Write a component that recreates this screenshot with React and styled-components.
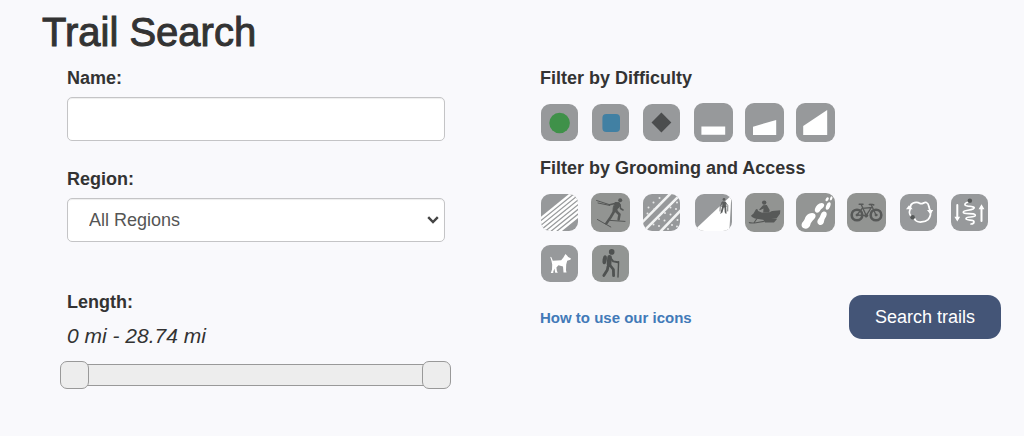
import React, { useState } from "react";
import styled, { createGlobalStyle } from "styled-components";

const MAX_MILES = 28.74;

const difficulty = [
    {
        name: "Easier",
        art: <circle cx="19.6" cy="20" r="10.3" fill="#3f9149" />
    },
    {
        name: "More difficult",
        art: <rect x="11.4" y="11" width="17.6" height="18" rx="4" fill="#4180a3" />
    },
    {
        name: "Most difficult",
        art: <path d="M19.4 9.6 29.3 19.6 19.4 29.6 9.5 19.6z" fill="#4b4d4e" />
    },
    {
        name: "Flat",
        large: true,
        art: <path d="M7.4 23.4H31.2V31.8H7.4z" fill="#fff" />
    },
    {
        name: "Rolling",
        large: true,
        art: <path d="M8 23.7 31.2 16.9V32H8z" fill="#fff" />
    },
    {
        name: "Steep",
        large: true,
        art: <path d="M7.2 23 31.2 7V32H7.2z" fill="#fff" />
    }
];

const grooming = [
    {
        name: "Groomed",
        art: (
            <g stroke="#fff" strokeWidth="2.4">
                {[0, 1, 2, 3, 4, 5, 6].map((n) => (
                    <path key={n} d={`M-2 ${27.6 + n * 4.7}L42 ${-8 + n * 4.7}`} />
                ))}
            </g>
        )
    },
    {
        name: "Skiing",
        large: true,
        tint: "#929492",
        art: (
            <g fill="none" stroke="#555756" strokeLinecap="round" strokeLinejoin="round">
                <circle cx="29.2" cy="7.2" r="2" fill="#555756" stroke="none" />
                <path d="M24.5 9.5 28.3 9.7 29 12.4 26 16.5 26 18.6 22 18.5 22.2 15.2z" fill="#555756" />
                <path d="M25 10.2 18.6 11.7M29 11.5 29.5 15.5 32 17" strokeWidth="1.6" />
                <path d="M23.3 18 19.5 24.5 15.3 30.5M24.5 17.5 28.5 21.5 27.6 26.5" strokeWidth="2.5" />
                <path d="M6.4 26.5 19.8 34M19 27.4 34 28.4M18.6 11.7 5.6 7.5M18.6 12.4 7 10" strokeWidth="1" />
            </g>
        )
    },
    {
        name: "Groomed with skate lane",
        art: (
            <g>
                <path d="M0 29.5 31-2M2 37.8 40 0M17 40 42 14" stroke="#f2f3f3" strokeWidth="2.6" />
                <g fill="#e8e9e9">
                    {[[17.5, 5], [11.5, 9.5], [17.8, 11], [6.5, 14.5], [12.5, 16], [5.5, 20.5], [35, 9.5], [28.5, 14.5], [34, 16], [23, 20], [28.5, 21.5], [17, 26], [22.5, 27.5], [11.5, 31.5], [17, 33], [35.5, 27], [30, 32], [35, 33.5], [26, 36]].map(([x, y]) => (
                        <circle key={`${x}-${y}`} cx={x} cy={y} r="1" />
                    ))}
                </g>
            </g>
        )
    },
    {
        name: "Backcountry",
        art: (
            <g>
                <path d="M0 37.5 36.2 3.5 37.3 4 35.3 39H0z" fill="#fff" />
                <g fill="#5b5d5d" stroke="#5b5d5d" strokeLinecap="round">
                    <circle cx="30" cy="6.4" r="1.4" stroke="none" />
                    <path d="M28.4 9H31.6L32 14H28.3z" />
                    <path d="M29 14 27.6 19M31.3 14 31.6 19" strokeWidth="1.8" />
                    <path d="M28 10 26.3 13 26 18M32 10 33.8 12.5 33.7 18M27.4 19 26.8 20.4M31.6 19 32 20.6" fill="none" strokeWidth="0.8" />
                </g>
            </g>
        )
    },
    {
        name: "Snowmobile",
        large: true,
        tint: "#929492",
        art: (
            <g fill="#575958">
                <circle cx="19.2" cy="9.6" r="2.2" />
                <path d="M18 12.3 21.8 11.9 24.7 17 24.2 19.8 18.2 19.6 18.5 15.4 14.8 17.3 14.2 16.4z" />
                <path d="M6 22.8 8.5 20.5 11 16.2 12.2 16 13.2 18 16.5 19.6 23.5 19.8 27 18 35.3 17.2 35 20.8 31.5 25.4 18 26.8 10 25.6 7 24z" />
                <path d="M18 26H32L29 29.4H20z" />
                <path d="M4.3 29.6Q7 30.4 11 29.7L19 28.4M12 25.5 9 29.8" fill="none" stroke="#575958" strokeWidth="1.1" strokeLinecap="round" />
            </g>
        )
    },
    {
        name: "Snowshoe",
        large: true,
        tint: "#939594",
        art: (
            <g fill="#fff">
                <path d="M10 23.2C13 19.3 19.4 18.9 19.6 22.8C19.7 26 15 28.3 14.4 31.4C13.8 34.5 10.5 36.6 7.8 35.3C5 34 5 30.8 7 28.7C9 26.6 8.7 25 10 23.2z" />
                <path d="M21.3 12C24 9 28.7 9.2 28.2 12.6C27.9 15 25 15.7 24 17.7C23 19.7 20.6 20.4 19.3 18.8C18 17 19.2 14.5 21.3 12z" />
                <path d="M25.3 20.4C27 17.6 31 18 30.7 21.4C30.5 24 28.3 25 28.1 28C27.8 31.2 25 33 22.8 31.5C20.7 30 21 27.4 22.8 25.5C24.4 23.8 24 22.4 25.3 20.4z" />
                <ellipse cx="32.2" cy="13" rx="2" ry="4" transform="rotate(22 32.2 13)" />
                <ellipse cx="31.1" cy="6.3" rx="1.3" ry="2.2" transform="rotate(35 31.1 6.3)" />
                <ellipse cx="35.2" cy="5.4" rx="1.1" ry="2.1" transform="rotate(20 35.2 5.4)" />
            </g>
        )
    },
    {
        name: "Fat bike",
        large: true,
        tint: "#929492",
        art: (
            <g fill="none" stroke="#575958" strokeLinecap="round">
                <circle cx="10" cy="22" r="5.3" strokeWidth="2.6" />
                <circle cx="29" cy="22" r="5.3" strokeWidth="2.6" />
                <circle cx="10" cy="22" r="1" fill="#575958" />
                <circle cx="29" cy="22" r="1" fill="#575958" />
                <circle cx="19.2" cy="22.6" r="1.5" fill="#575958" />
                <path d="M10 22 15.2 15.3 24.3 14.6 19.2 22.6 10 22M19.2 22.6 14.3 11.7M29 22 24 11.4" strokeWidth="1.3" />
                <path d="M12.2 11.2H16M22.3 11.4H25.6L26.8 12" strokeWidth="1.5" />
            </g>
        )
    },
    {
        name: "Loop trail",
        art: (
            <g>
                <path d="M13.5 24C10.8 22.8 9.8 19.5 11 16.5C12 13.2 10.7 11.5 13.6 10.3C16 9.2 18.7 9 21 10.4C23.6 11.8 24.7 8.7 27.4 9.5C30.5 10.7 29.3 14 31 17C32.4 20 31.3 24.4 29 26.6C26 29.2 19 30 16.7 27.5C15.6 26.2 15.7 25 13.5 24z" fill="none" stroke="#fff" strokeWidth="1.8" />
                <path d="M10 12.3 13.7 16.3H7zM28 17H34.2L31.4 21.5z" fill="#fff" />
                <circle cx="13.6" cy="24.3" r="2.3" fill="#555858" />
            </g>
        )
    },
    {
        name: "Out and back trail",
        art: (
            <g fill="none" stroke="#fff" strokeLinecap="round">
                <path d="M19.5 9C14 9.6 13.4 12.7 18 13.2C23 13.6 26 14.3 23 16.1C20 17.8 13.4 16.7 13.3 19.2C13.3 22 25.7 19 25.3 22.4C24.8 25.2 16 22.8 16 25.6C16 28 24 26.3 24 28.7C24 30.3 22.6 31 21 31" strokeWidth="1.7" />
                <path d="M7.3 12V25M31.5 15V28" strokeWidth="2" />
                <path d="M4.4 23.8H10.2L7.3 28.6zM28.6 16.2H34.4L31.5 11.2z" fill="#fff" stroke="none" />
                <circle cx="19.8" cy="7.7" r="2.3" fill="#555858" stroke="none" />
            </g>
        )
    },
    {
        name: "Dog friendly",
        art: (
            <path d="M10.2 12.7 11.4 13.2 12.8 16.7 21.2 16.2 23.4 13.6 25.4 10 27 11.6 28.2 12.9 31 14.4 30.4 15.8 27.2 16.8 26.2 20.6 26 26.3 26.5 28.4H23.5L23 22.4 18.4 21.3 16.4 23.4 16.9 27 17.8 28.8H15.2L14.4 24.6 13.2 28 13.4 29H10.8L12 25.4 12.2 20.5 11.5 17z" fill="#fff" />
        )
    },
    {
        name: "Hiking",
        tint: "#929593",
        art: (
            <g fill="none" stroke="#4f5251" strokeLinecap="round" strokeLinejoin="round">
                <circle cx="20.7" cy="7.9" r="2.8" fill="#4f5251" stroke="none" />
                <ellipse cx="13.7" cy="15.7" rx="2.1" ry="4.6" transform="rotate(8 13.7 15.7)" fill="#4f5251" stroke="none" />
                <path d="M18.6 13.4 18 20.5" strokeWidth="4.6" />
                <path d="M20 14.5 22.2 17.4 27 18.2" strokeWidth="1.9" />
                <path d="M17 22.5 16.3 26 12.8 31.6M19.2 21.5 22.4 25.5 22.6 31.7" strokeWidth="2.8" />
                <path d="M27.6 17.6 27 33" strokeWidth="1.4" />
            </g>
        )
    }
];

const Filters = ({ items }) => {
    const [picked, setPicked] = useState([]);
    const toggle = (name) => {
        setPicked(picked.includes(name) ? picked.filter((el) => el !== name) : [...picked, name]);
    };
    return (
        <IconGrid>
            {items.map(({ name, large, tint, art }, index) => {
                const clip = `tile-${name.replace(/ /g, "-")}`;
                const side = large ? 39 : 37;
                const inset = large ? 0 : 1;
                return (
                    <IconButton
                        key={index}
                        type="button"
                        aria-label={name}
                        aria-pressed={picked.includes(name)}
                        onClick={() => toggle(name)}
                    >
                        <svg viewBox="0 0 39 39" aria-hidden="true">
                            <clipPath id={clip}>
                                <rect x={inset} y={inset} width={side} height={side} rx="9" />
                            </clipPath>
                            <g clipPath={`url(#${clip})`}>
                                <rect width="39" height="39" fill={tint || "#97999b"} />
                                {art}
                            </g>
                        </svg>
                    </IconButton>
                );
            })}
        </IconGrid>
    );
};

const App = () => {
    const [low, setLow] = useState(0);
    const [high, setHigh] = useState(MAX_MILES);

    return (
        <Page>
            <GlobalStyle />
            <Title>Trail Search</Title>
            <Form onSubmit={(e) => e.preventDefault()}>
                <Column>
                    <Label htmlFor="name">Name:</Label>
                    <TextBox id="name" type="text" />
                    <Label htmlFor="region">Region:</Label>
                    <SelectWrap>
                        <Select id="region">
                            <option>All Regions</option>
                        </Select>
                        <Chevron viewBox="0 0 12 8" aria-hidden="true">
                            <path d="M1.2 1.2 6 6 10.8 1.2" fill="none" stroke="#444" strokeWidth="2.4" />
                        </Chevron>
                    </SelectWrap>
                    <Label as="div" id="length">Length:</Label>
                    <Miles>{low} mi - {high} mi</Miles>
                    <Slider role="group" aria-labelledby="length">
                        <Range
                            aria-label="Shortest length"
                            min="0"
                            max={MAX_MILES}
                            step="0.01"
                            value={low}
                            onChange={(e) => setLow(Math.min(Number(e.target.value), high))}
                        />
                        <Range
                            aria-label="Longest length"
                            min="0"
                            max={MAX_MILES}
                            step="0.01"
                            value={high}
                            onChange={(e) => setHigh(Math.max(Number(e.target.value), low))}
                        />
                    </Slider>
                </Column>
                <Column>
                    <Heading>Filter by Difficulty</Heading>
                    <Filters items={difficulty} />
                    <Heading>Filter by Grooming and Access</Heading>
                    <Filters items={grooming} />
                    <Actions>
                        <HelpLink href="#icons">How to use our icons</HelpLink>
                        <SearchButton type="submit">Search trails</SearchButton>
                    </Actions>
                </Column>
            </Form>
        </Page>
    );
};

const GlobalStyle = createGlobalStyle`
* {
    box-sizing: border-box;
}
body {
    margin: 0;
    background: #f9f9fc;
    color: #333;
    font-family: "Liberation Sans", Arial, sans-serif;
    font-size: 18px;
}
`;

const Page = styled.main`
padding: 8px 23px 40px 42px;
`;

const Title = styled.h1`
margin: 0;
font-size: 40px;
font-weight: 500;
line-height: 48px;
-webkit-text-stroke: 1px #333;
`;

const Form = styled.form`
display: grid;
grid-template-columns: 378fr 461fr;
column-gap: 95px;
padding: 8px 0 0 25px;
`;

const Column = styled.div`
display: flex;
flex-direction: column;
min-width: 0;
`;

const Label = styled.label`
font-weight: bold;
line-height: 28px;
`;

const TextBox = styled.input`
height: 44px;
margin: 5px 0 24px;
padding: 0 21px;
border: 1px solid #c4c4c6;
border-radius: 5px;
background: #fff;
box-shadow: inset 0 1px 1px #eee;
color: #555;
font: inherit;
`;

const SelectWrap = styled.div`
position: relative;
margin: 5px 0 46px;
`;

const Select = styled.select`
appearance: none;
width: 100%;
height: 44px;
padding: 0 21px;
border: 1px solid #c4c4c6;
border-radius: 5px;
background: #fff;
box-shadow: inset 0 1px 1px #eee;
color: #555;
font: inherit;
`;

const Chevron = styled.svg`
position: absolute;
right: 6px;
top: 18px;
width: 12px;
height: 8px;
pointer-events: none;
`;

const Miles = styled.output`
font-size: 21px;
font-style: italic;
line-height: 40px;
`;

const Slider = styled.div`
position: relative;
display: flex;
align-items: center;
height: 28px;
margin: 5px -6px 0 -7px;

&::before {
    content: "";
    box-sizing: border-box;
    flex: 1;
    height: 22px;
    margin: 0 20px;
    border: 1px solid #999;
    background: #ededed;
}
`;

const Range = styled.input.attrs({ type: "range" })`
position: absolute;
inset: 0;
appearance: none;
width: 100%;
height: 28px;
margin: 0;
background: none;
pointer-events: none;

&::-webkit-slider-thumb {
    appearance: none;
    width: 29px;
    height: 28px;
    border: 1px solid #999;
    border-radius: 7px;
    background: #ededed;
    pointer-events: auto;
}
`;

const Heading = styled.h2`
margin: 0;
font-size: 18px;
line-height: 28px;
`;

const IconGrid = styled.div`
display: grid;
grid-template-columns: repeat(9, 1fr);
row-gap: 12px;
margin: 11px 0 12px;
`;

const IconButton = styled.button`
width: 39px;
height: 39px;
padding: 0;
border: 0;
background: none;
cursor: pointer;

svg {
    display: block;
}
`;

const Actions = styled.div`
display: flex;
align-items: center;
justify-content: space-between;
`;

const HelpLink = styled.a`
color: #427ab8;
font-size: 15px;
font-weight: bold;
text-decoration: none;
`;

const SearchButton = styled.button`
height: 44px;
padding: 0 26px;
border: 0;
border-radius: 13px;
background: #445577;
color: #fff;
font: inherit;
cursor: pointer;
`;

export default App;
